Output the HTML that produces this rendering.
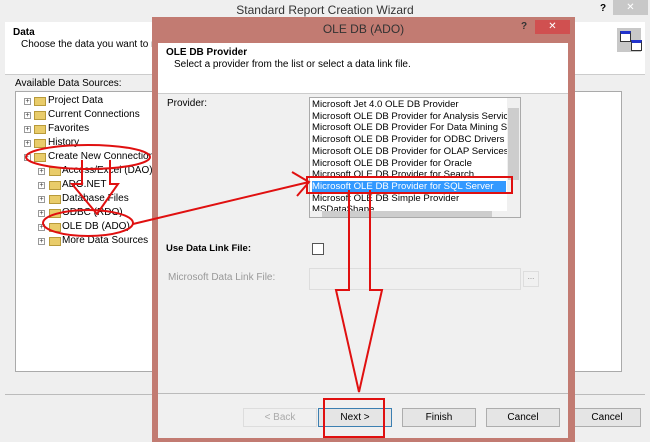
<!DOCTYPE html><html><head><style>
body{margin:0;width:650px;height:442px;overflow:hidden;background:#efefef;font-family:"Liberation Sans",sans-serif;font-size:10px;color:#000;position:relative}
.a{position:absolute;white-space:nowrap}
.fold{position:absolute;width:12px;height:9px;background:#e9cc6a;border:1px solid #b89a3a;box-sizing:border-box}
.pl{position:absolute;width:7px;height:7px;border:1px solid #999;box-sizing:border-box;font-size:7px;line-height:5px;text-align:center;color:#333;background:#fff}
.btn{position:absolute;height:19px;border:1px solid #adadad;background:#e5e5e5;box-sizing:border-box;text-align:center;line-height:17px;font-size:10px}
</style></head><body>
<div class="a" style="left:0;top:3px;width:650px;text-align:center;font-size:12px;color:#333">Standard Report Creation Wizard</div>
<div class="a" style="left:600px;top:3px;font-weight:bold;font-size:10px">?</div>
<div class="a" style="left:613px;top:0;width:35px;height:15px;background:#c8c8c8;color:#fff;text-align:center;font-size:10px;line-height:15px">✕</div>
<div class="a" style="left:5px;top:22px;width:640px;height:52px;background:#fff;border-bottom:1px solid #ccc"></div>
<div class="a" style="left:13px;top:27px;font-weight:bold">Data</div>
<div class="a" style="left:21px;top:39px">Choose the data you want to report on</div>
<div class="a" style="left:617px;top:28px;width:24px;height:24px;background:#c8c8c8"></div>
<div class="a" style="left:620px;top:31px;width:9px;height:7px;background:#fff;border:1px solid #333;border-top:3px solid #2233cc"></div>
<div class="a" style="left:631px;top:40px;width:9px;height:7px;background:#fff;border:1px solid #333;border-top:3px solid #2233cc"></div>
<div class="a" style="left:15px;top:78px">Available Data Sources:</div>
<div class="a" style="left:15px;top:91px;width:605px;height:279px;background:#fff;border:1px solid #aaa"></div>
<div class="a" style="left:5px;top:394px;width:640px;border-top:1px solid #bbb"></div>
<div class="btn" style="left:573px;top:408px;width:68px">Cancel</div>

<div class="pl" style="left:24px;top:98px">+</div><div class="fold" style="left:34px;top:97px"></div><div class="a" style="left:48px;top:95px">Project Data</div>
<div class="pl" style="left:24px;top:112px">+</div><div class="fold" style="left:34px;top:111px"></div><div class="a" style="left:48px;top:109px">Current Connections</div>
<div class="pl" style="left:24px;top:126px">+</div><div class="fold" style="left:34px;top:125px"></div><div class="a" style="left:48px;top:123px">Favorites</div>
<div class="pl" style="left:24px;top:140px">+</div><div class="fold" style="left:34px;top:139px"></div><div class="a" style="left:48px;top:137px">History</div>
<div class="pl" style="left:24px;top:154px">-</div><div class="fold" style="left:34px;top:153px"></div><div class="a" style="left:48px;top:151px">Create New Connection</div>
<div class="pl" style="left:38px;top:168px">+</div><div class="fold" style="left:49px;top:167px"></div><div class="a" style="left:62px;top:165px">Access/Excel (DAO)</div>
<div class="pl" style="left:38px;top:182px">+</div><div class="fold" style="left:49px;top:181px"></div><div class="a" style="left:62px;top:179px">ADO.NET</div>
<div class="pl" style="left:38px;top:196px">+</div><div class="fold" style="left:49px;top:195px"></div><div class="a" style="left:62px;top:193px">Database Files</div>
<div class="pl" style="left:38px;top:210px">+</div><div class="fold" style="left:49px;top:209px"></div><div class="a" style="left:62px;top:207px">ODBC (RDO)</div>
<div class="pl" style="left:38px;top:224px">+</div><div class="fold" style="left:49px;top:223px"></div><div class="a" style="left:62px;top:221px">OLE DB (ADO)</div>
<div class="pl" style="left:38px;top:238px">+</div><div class="fold" style="left:49px;top:237px"></div><div class="a" style="left:62px;top:235px">More Data Sources</div>

<div class="a" style="left:152px;top:17px;width:423px;height:425px;background:#c27b72"></div>
<div class="a" style="left:152px;top:22px;width:423px;text-align:center;font-size:12px;color:#333">OLE DB (ADO)</div>
<div class="a" style="left:521px;top:21px;font-weight:bold;font-size:10px;color:#333">?</div>
<div class="a" style="left:535px;top:20px;width:35px;height:14px;background:#d05050;color:#fff;text-align:center;line-height:14px;font-size:10px">✕</div>
<div class="a" style="left:158px;top:43px;width:410px;height:395px;background:#f0f0f0"></div>
<div class="a" style="left:158px;top:43px;width:410px;height:50px;background:#fff;border-bottom:1px solid #ccc"></div>
<div class="a" style="left:166px;top:47px;font-weight:bold">OLE DB Provider</div>
<div class="a" style="left:174px;top:59px">Select a provider from the list or select a data link file.</div>
<div class="a" style="left:167px;top:98px">Provider:</div>
<div class="a" style="left:309px;top:97px;width:212px;height:121px;background:#fff;border:1px solid #aaa;box-sizing:border-box;overflow:hidden">
<div style="padding:1px 0 0 2px;line-height:11.7px;font-size:9.6px">
<div>Microsoft Jet 4.0 OLE DB Provider</div>
<div>Microsoft OLE DB Provider for Analysis Services</div>
<div>Microsoft OLE DB Provider For Data Mining Services</div>
<div>Microsoft OLE DB Provider for ODBC Drivers</div>
<div>Microsoft OLE DB Provider for OLAP Services 8.0</div>
<div>Microsoft OLE DB Provider for Oracle</div>
<div>Microsoft OLE DB Provider for Search</div>
<div style="background:#3399ff;color:#fff;width:194px">Microsoft OLE DB Provider for SQL Server</div>
<div>Microsoft OLE DB Simple Provider</div>
<div>MSDataShape</div></div>
<div class="a" style="left:197px;top:0;width:13px;height:113px;background:#f0f0f0"></div>
<div class="a" style="left:198px;top:10px;width:11px;height:72px;background:#cdcdcd"></div>
<div class="a" style="left:0;top:113px;width:210px;height:6px;background:#f0f0f0"></div>
<div class="a" style="left:12px;top:113px;width:170px;height:6px;background:#cdcdcd"></div>
</div>
<div class="a" style="left:166px;top:243px;font-weight:bold;font-size:9.5px">Use Data Link File:</div>
<div class="a" style="left:312px;top:243px;width:10px;height:10px;border:1px solid #555;background:#fff"></div>
<div class="a" style="left:168px;top:272px;color:#999">Microsoft Data Link File:</div>
<div class="a" style="left:309px;top:268px;width:212px;height:22px;border:1px solid #ddd;box-sizing:border-box"></div>
<div class="a" style="left:523px;top:271px;width:16px;height:16px;border:1px solid #ddd;box-sizing:border-box;font-size:8px;text-align:center;color:#888">...</div>
<div class="a" style="left:158px;top:393px;width:410px;border-top:1px solid #bbb"></div>
<div class="btn" style="left:243px;top:408px;width:74px;color:#aaa;border-color:#ddd;background:#f0f0f0">&lt; Back</div>
<div class="btn" style="left:318px;top:408px;width:74px;border-color:#3c7fb1">Next &gt;</div>
<div class="btn" style="left:402px;top:408px;width:74px">Finish</div>
<div class="btn" style="left:486px;top:408px;width:74px">Cancel</div>

<svg class="a" style="left:0;top:0" width="650" height="442" fill="none" stroke="#e01010" stroke-width="2">
<ellipse cx="88" cy="157" rx="62" ry="12"/>
<ellipse cx="88" cy="223" rx="45" ry="13"/>
<path d="M82 160 V184 H72 L97 214 L118 184 H110 V160"/>
<path d="M133 224 L309 182 M292 172 L309 182 L297 196" />
<rect x="307" y="177" width="205" height="16"/>
<path d="M349 190 V290 H336 L359 392 L382 290 H370 V190"/>
<rect x="324" y="399" width="60" height="38"/>
</svg>
</body></html>
